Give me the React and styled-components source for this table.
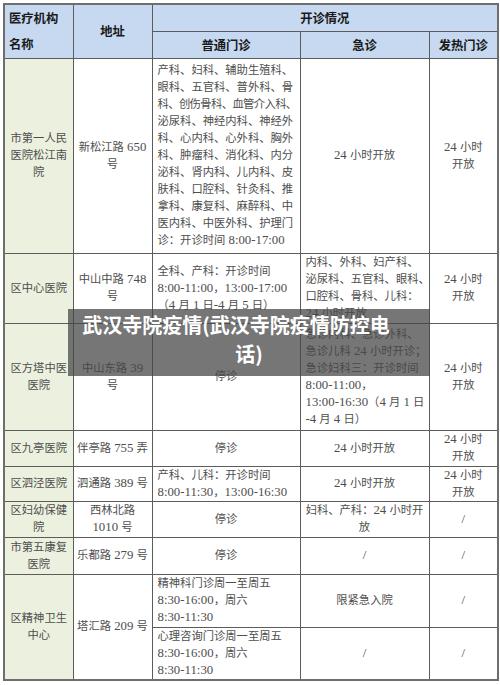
import React from "react";
import styled, { createGlobalStyle } from "styled-components";

const Global = createGlobalStyle`
  html, body { margin: 0; padding: 0; background: #ffffff; }
  body { width: 500px; height: 685px; overflow: hidden; }
`;

const Page = styled.div`
  position: relative;
  padding: 3px 3px 0 3px;
  width: 500px;
  box-sizing: border-box;
`;

const Table = styled.table`
  width: 494px;
  table-layout: fixed;
  border-collapse: collapse;
  border: 2px solid #6e6e6e;
  font-family: "Liberation Serif", "Noto Sans CJK SC", serif;
  font-size: 11.3px;
  color: #4e4e4e;
`;

const Row = styled.tr`
  height: ${(p) => p.$h}px;
`;

const Head = styled.th`
  background: #c6d9f0;
  border: 1px solid #5c5c5c;
  font-family: "Noto Sans CJK SC", sans-serif;
  font-weight: 700;
  font-size: 12.3px;
  color: #1a1a1a;
  text-align: ${(p) => p.$align || "center"};
  padding: ${(p) => (p.$align === "left" ? "0 4px" : "0")};
  line-height: ${(p) => p.$lh || 16}px;
  vertical-align: middle;
`;

const Cell = styled.td`
  border: 1px solid #5c5c5c;
  background: ${(p) => (p.$first ? "#ebf1de" : "#ffffff")};
  text-align: ${(p) => p.$align || "center"};
  vertical-align: middle;
  padding: ${(p) => (p.$align === "left" ? "0 2px 0 5px" : "0 2px")};
  line-height: 17px;
  white-space: nowrap;
  overflow: hidden;
`;

const Latin = styled.span`
  font-size: 12.8px;
`;

const Tight = styled.span`
  letter-spacing: -0.6px;
`;

const Overlay = styled.div`
  position: absolute;
  left: 68px;
  top: 309px;
  width: 362px;
  height: 67px;
  box-sizing: border-box;
  background: rgba(70, 70, 70, 0.74);
  color: #ffffff;
  font-family: "Noto Sans CJK SC", sans-serif;
  font-weight: 700;
  font-size: 20px;
  line-height: 29px;
  text-align: center;
  padding: 1px 0 0 0;
  white-space: nowrap;
`;

const OverlayLine = styled.div`
  padding-right: ${(p) => p.$shift || 0}px;
`;

const Mixed = ({ text }) =>
  text
    .split(/([\x20-\x7e]+)/)
    .filter((s) => s.length)
    .map((s, i) =>
      /^[\x20-\x7e]+$/.test(s) ? <Latin key={i}>{s}</Latin> : <React.Fragment key={i}>{s}</React.Fragment>
    );

const Lines = ({ items }) =>
  items.map((t, i) => (
    <React.Fragment key={i}>
      {i > 0 && <br />}
      {typeof t === "string" ? <Mixed text={t} /> : t}
    </React.Fragment>
  ));

const Open24 = () => <Lines items={["24 小时", "开放"]} />;

export default function App() {
  return (
    <>
      <Global />
      <Page>
        <Table>
          <colgroup>
            <col style={{ width: 69 }} />
            <col style={{ width: 79 }} />
            <col style={{ width: 148 }} />
            <col style={{ width: 129 }} />
            <col style={{ width: 69 }} />
          </colgroup>
          <tbody>
            <Row $h={27}>
              <Head rowSpan={2} $align="left" $lh={26}>
                <Lines items={["医疗机构", "名称"]} />
              </Head>
              <Head rowSpan={2}>地址</Head>
              <Head colSpan={3}>开诊情况</Head>
            </Row>
            <Row $h={27}>
              <Head>普通门诊</Head>
              <Head>急诊</Head>
              <Head>发热门诊</Head>
            </Row>

            <Row $h={195}>
              <Cell $first>
                <Lines items={["市第一人民", "医院松江南", "院"]} />
              </Cell>
              <Cell>
                <Lines items={["新松江路 650", "号"]} />
              </Cell>
              <Cell $align="left">
                <Lines
                  items={[
                    "产科、妇科、辅助生殖科、",
                    "眼科、五官科、普外科、骨",
                    <Tight>科、创伤骨科、血管介入科、</Tight>,
                    "泌尿科、神经内科、神经外",
                    "科、心内科、心外科、胸外",
                    "科、肿瘤科、消化科、内分",
                    "泌科、肾内科、儿内科、皮",
                    "肤科、口腔科、针灸科、推",
                    "拿科、康复科、麻醉科、中",
                    "医内科、中医外科、护理门",
                    "诊：开诊时间 8:00-17:00",
                  ]}
                />
              </Cell>
              <Cell>
                <Mixed text="24 小时开放" />
              </Cell>
              <Cell>
                <Open24 />
              </Cell>
            </Row>

            <Row $h={70}>
              <Cell $first>区中心医院</Cell>
              <Cell>
                <Lines items={["中山中路 748", "号"]} />
              </Cell>
              <Cell $align="left">
                <Lines
                  items={[
                    "全科、产科：开诊时间",
                    "8:00-11:00，13:00-17:00",
                    "（4 月 1 日-4 月 5 日）",
                  ]}
                />
              </Cell>
              <Cell $align="left">
                <Lines
                  items={[
                    "内科、外科、妇产科、",
                    "泌尿科、五官科、眼科、",
                    "口腔科、骨科、儿科：",
                    "24 小时开放",
                  ]}
                />
              </Cell>
              <Cell>
                <Open24 />
              </Cell>
            </Row>

            <Row $h={107}>
              <Cell $first>
                <Lines items={["区方塔中医", "医院"]} />
              </Cell>
              <Cell>
                <Lines items={["中山东路 39", "号"]} />
              </Cell>
              <Cell>停诊</Cell>
              <Cell $align="left">
                <Lines
                  items={[
                    "急诊内科、急诊外科、",
                    "急诊儿科 24 小时开诊；",
                    "急诊妇科三：开诊时间",
                    "8:00-11:00，",
                    "13:00-16:30（4 月 1 日",
                    "-4 月 4 日）",
                  ]}
                />
              </Cell>
              <Cell>
                <Open24 />
              </Cell>
            </Row>

            <Row $h={36}>
              <Cell $first>区九亭医院</Cell>
              <Cell>
                <Mixed text="伴亭路 755 弄" />
              </Cell>
              <Cell>停诊</Cell>
              <Cell>
                <Mixed text="24 小时开放" />
              </Cell>
              <Cell>
                <Open24 />
              </Cell>
            </Row>

            <Row $h={35}>
              <Cell $first>区泗泾医院</Cell>
              <Cell>
                <Mixed text="泗通路 389 号" />
              </Cell>
              <Cell $align="left">
                <Lines items={["产科、儿科：开诊时间", "8:00-11:30，13:00-16:30"]} />
              </Cell>
              <Cell>
                <Mixed text="24 小时开放" />
              </Cell>
              <Cell>
                <Open24 />
              </Cell>
            </Row>

            <Row $h={36}>
              <Cell $first>
                <Lines items={["区妇幼保健", "院"]} />
              </Cell>
              <Cell>
                <Lines items={["西林北路", "1010 号"]} />
              </Cell>
              <Cell>停诊</Cell>
              <Cell>
                <Lines items={["妇科、产科：24 小时开", "放"]} />
              </Cell>
              <Cell>
                <Latin>/</Latin>
              </Cell>
            </Row>

            <Row $h={37}>
              <Cell $first>
                <Lines items={["市第五康复", "医院"]} />
              </Cell>
              <Cell>
                <Mixed text="乐都路 279 号" />
              </Cell>
              <Cell>停诊</Cell>
              <Cell>
                <Latin>/</Latin>
              </Cell>
              <Cell>
                <Latin>/</Latin>
              </Cell>
            </Row>

            <Row $h={53}>
              <Cell $first rowSpan={2}>
                <Lines items={["区精神卫生", "中心"]} />
              </Cell>
              <Cell rowSpan={2}>
                <Mixed text="塔汇路 209 号" />
              </Cell>
              <Cell $align="left">
                <Lines items={["精神科门诊周一至周五", "8:30-16:00，周六", "8:30-11:30"]} />
              </Cell>
              <Cell>限紧急入院</Cell>
              <Cell>
                <Latin>/</Latin>
              </Cell>
            </Row>
            <Row $h={53}>
              <Cell $align="left">
                <Lines items={["心理咨询门诊周一至周五", "8:30-16:00，周六", "8:30-11:30"]} />
              </Cell>
              <Cell>
                <Latin>/</Latin>
              </Cell>
              <Cell>
                <Latin>/</Latin>
              </Cell>
            </Row>
          </tbody>
        </Table>
        <Overlay>
          <OverlayLine $shift={26}>武汉寺院疫情(武汉寺院疫情防控电</OverlayLine>
          <OverlayLine>话)</OverlayLine>
        </Overlay>
      </Page>
    </>
  );
}
